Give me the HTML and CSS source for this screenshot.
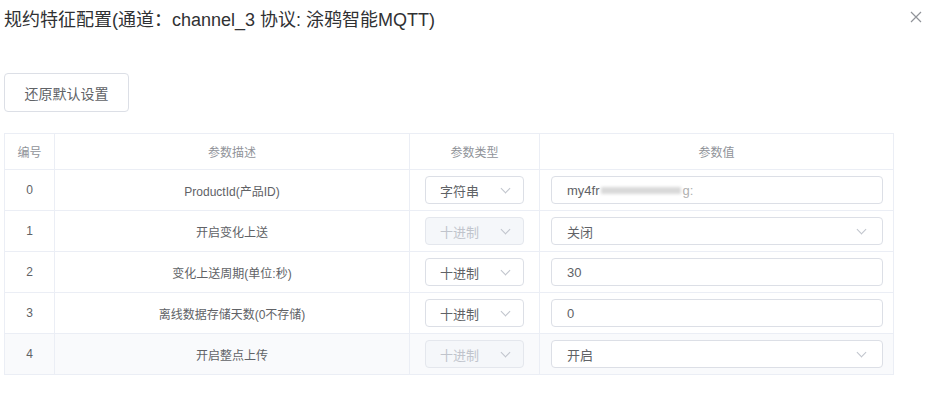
FILE: index.html
```html
<!DOCTYPE html>
<html lang="zh">
<head>
<meta charset="utf-8">
<link rel="stylesheet" href="styles.css">
</head>
<body>
<div class="dialog">
  <div class="header">
    <div class="title">规约特征配置(通道：channel_3 协议: 涂鸦智能MQTT)</div>
    <svg class="close" width="12" height="12" viewBox="0 0 12 12"><path d="M1 1L11 11M11 1L1 11" stroke="#909399" stroke-width="1.2" fill="none"/></svg>
  </div>
  <div class="body">
    <button class="btn">还原默认设置</button>
    <table class="tbl">
      <colgroup><col class="c1"><col class="c2"><col class="c3"><col class="c4"></colgroup>
      <thead>
        <tr><th>编号</th><th>参数描述</th><th>参数类型</th><th>参数值</th></tr>
      </thead>
      <tbody>
        <tr>
          <td>0</td><td>ProductId(产品ID)</td>
          <td><div class="sel"><span>字符串</span><i class="chev"></i></div></td>
          <td><div class="inp">my4fr<span class="blur"></span><span class="tail">g:</span></div></td>
        </tr>
        <tr>
          <td>1</td><td>开启变化上送</td>
          <td><div class="sel dis"><span>十进制</span><i class="chev"></i></div></td>
          <td><div class="inp sel wide"><span>关闭</span><i class="chev"></i></div></td>
        </tr>
        <tr>
          <td>2</td><td>变化上送周期(单位:秒)</td>
          <td><div class="sel"><span>十进制</span><i class="chev"></i></div></td>
          <td><div class="inp">30</div></td>
        </tr>
        <tr>
          <td>3</td><td>离线数据存储天数(0不存储)</td>
          <td><div class="sel"><span>十进制</span><i class="chev"></i></div></td>
          <td><div class="inp">0</div></td>
        </tr>
        <tr class="hover">
          <td>4</td><td>开启整点上传</td>
          <td><div class="sel dis"><span>十进制</span><i class="chev"></i></div></td>
          <td><div class="inp sel wide"><span>开启</span><i class="chev"></i></div></td>
        </tr>
      </tbody>
    </table>
  </div>
</div>
</body>
</html>
```
FILE: styles.css
```css
* { box-sizing: border-box; }
html, body { margin: 0; padding: 0; background: #fff; }
body {
  font-family: "Liberation Sans", Arial, "Noto Sans CJK SC", sans-serif;
  color: #606266;
  width: 932px;
  height: 408px;
  overflow: hidden;
}
.dialog { padding: 0 0 0 4px; }
.header {
  display: flex;
  justify-content: space-between;
  align-items: center;
  height: 40px;
  padding-right: 10px;
}
.title {
  font-size: 18px;
  color: #303133;
  line-height: 24px;
}
.close { margin-top: -6px; }
.body { padding-top: 33px; }
.btn {
  display: block;
  width: 125px;
  height: 39px;
  border: 1px solid #dcdfe6;
  border-radius: 4px;
  background: #fff;
  color: #606266;
  font-family: "Liberation Sans", "Noto Sans CJK SC", sans-serif;
  font-size: 14px;
  padding: 0;
  margin: 0;
}
.tbl {
  margin-top: 21px;
  border-collapse: collapse;
  table-layout: fixed;
  width: 889px;
  font-size: 12px;
}
.c1 { width: 50px; }
.c2 { width: 355px; }
.c3 { width: 130px; }
.c4 { width: 354px; }
.tbl th, .tbl td {
  border: 1px solid #ebeef5;
  text-align: center;
  padding: 0;
  font-weight: normal;
}
.tbl th {
  height: 36px;
  color: #909399;
  font-size: 12px;
}
.tbl td { height: 41px; color: #606266; }
.tbl tr.hover td { background: #f9fafc; }
.sel {
  display: flex;
  align-items: center;
  justify-content: space-between;
  width: 99px;
  height: 28px;
  margin-left: 15px;
  border: 1px solid #dcdfe6;
  border-radius: 4px;
  background: #fff;
  padding: 0 12px 0 14px;
  font-size: 13px;
  color: #606266;
  text-align: left;
}
.sel.dis { background: #f5f7fa; border-color: #e4e7ed; color: #c0c4cc; }
.chev {
  width: 7px;
  height: 7px;
  border-right: 1px solid #c0c4cc;
  border-bottom: 1px solid #c0c4cc;
  transform: rotate(45deg);
  margin-top: -4px;
  margin-right: 2px;
}
.inp {
  width: 332px;
  height: 28px;
  margin-left: 11px;
  border: 1px solid #dcdfe6;
  border-radius: 4px;
  background: #fff;
  padding: 0 15px;
  font-size: 13px;
  color: #606266;
  text-align: left;
  display: flex;
  align-items: center;
}
.inp.wide { width: 332px; margin-left: 11px; }
.blur {
  display: inline-block;
  width: 80px;
  height: 7px;
  margin: 0 2px 0 1px;
  background: #d9d9d9;
  filter: blur(1.5px);
}
.tail { color: #b0b0b0; }
```
